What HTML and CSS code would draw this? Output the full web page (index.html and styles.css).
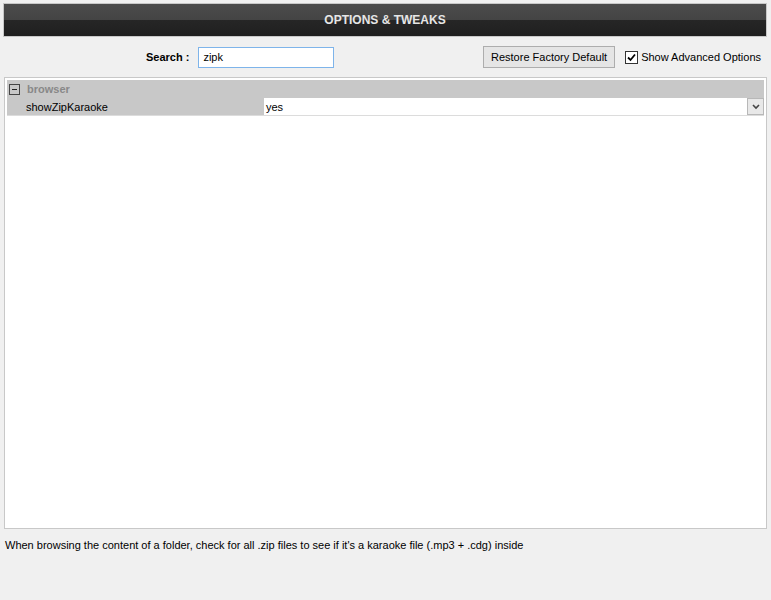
FILE: index.html
```html
<!DOCTYPE html>
<html lang="en">
<head>
  <meta charset="UTF-8">
  <title>Options &amp; Tweaks</title>
  <link rel="stylesheet" href="styles.css">
</head>
<body>
  <div class="header">OPTIONS &amp; TWEAKS</div>

  <div class="toolbar">
    <div class="search">
      <label for="search">Search :</label>
      <input type="text" id="search" value="zipk">
    </div>
    <div class="actions">
      <button class="button">Restore Factory Default</button>
      <label class="advanced"><span class="check"><svg width="9" height="9" viewBox="0 0 9 9"><path d="M1 4.5 L3.5 7 L8 1.5" fill="none" stroke="#000" stroke-width="1.8"/></svg></span>Show Advanced Options</label>
    </div>
  </div>

  <div class="options">
    <div class="group">
      <span class="toggle"></span>
      <span class="group-name">browser</span>
    </div>
    <div class="row">
      <div class="name">showZipKaraoke</div>
      <div class="value">
        <span>yes</span>
        <span class="drop"><svg width="8" height="6" viewBox="0 0 8 6"><path d="M1 1 L4 4 L7 1" fill="none" stroke="#444" stroke-width="1.6"/></svg></span>
      </div>
    </div>
  </div>

  <p class="description">When browsing the content of a folder, check for all .zip files to see if it's a karaoke file (.mp3 + .cdg) inside</p>
</body>
</html>
```

FILE: styles.css
```css
* {
  margin: 0;
  padding: 0;
  box-sizing: border-box;
}

body {
  font-family: 'Liberation Sans', Arial, sans-serif;
  font-size: 11px;
  color: #000;
  background-color: #f0f0f0;
  padding: 3px 4px 0 4px;
  width: 771px;
  height: 600px;
}

.header {
  height: 34px;
  border: 1px solid #c8c8c8;
  background: linear-gradient(to bottom, #4b4b4b 0, #444 50%, #262626 50%, #1f1f1f 100%);
  color: #e6e6e6;
  font-weight: bold;
  font-size: 12px;
  text-align: center;
  line-height: 32px;
  margin-left: -1px;
}

.toolbar {
  display: flex;
  align-items: center;
  height: 40px;
}

.search {
  display: flex;
  align-items: center;
  margin-left: 142px;
}

.search label {
  font-weight: bold;
  margin-right: 9px;
}

.search input {
  width: 136px;
  height: 21px;
  border: 1px solid #7eb4ea;
  padding: 0 4px;
  font-family: inherit;
  font-size: 11px;
  outline: none;
}

.actions {
  display: flex;
  align-items: center;
  margin-left: auto;
}

.button {
  height: 22px;
  padding: 0 7px;
  background: #e5e5e5;
  border: 1px solid #adadad;
  font-family: inherit;
  font-size: 11px;
  color: #000;
}

.advanced {
  display: flex;
  align-items: center;
  margin-left: 10px;
  margin-right: 6px;
}

.check {
  width: 13px;
  height: 13px;
  border: 1px solid #333;
  background: #fff;
  display: flex;
  align-items: center;
  justify-content: center;
  margin-right: 3px;
}

.options {
  height: 452px;
  border: 1px solid #c8c8c8;
  background: #fff;
  padding: 2px 2px 0 2px;
}

.group {
  display: flex;
  align-items: center;
  height: 18px;
  background: #c8c8c8;
  padding-left: 2px;
}

.toggle {
  width: 11px;
  height: 11px;
  border: 1px solid #444;
  position: relative;
  margin-right: 7px;
}

.toggle::after {
  content: "";
  position: absolute;
  left: 2px;
  top: 4px;
  width: 5px;
  height: 1px;
  background: #222;
}

.group-name {
  color: #888;
  font-weight: bold;
}

.row {
  display: flex;
  height: 18px;
  background: #c8c8c8;
  border-bottom: 1px solid #dcdcdc;
}

.name {
  width: 257px;
  padding-left: 19px;
  line-height: 18px;
}

.value {
  flex: 1;
  display: flex;
  align-items: center;
  background: #fff;
  padding-left: 2px;
}

.value span:first-child {
  flex: 1;
}

.drop {
  width: 17px;
  height: 17px;
  border: 1px solid #b8b8b8;
  background: #e8e8e8;
  display: flex;
  align-items: center;
  justify-content: center;
}

.description {
  margin-top: 10px;
  margin-left: 1px;
}
```
